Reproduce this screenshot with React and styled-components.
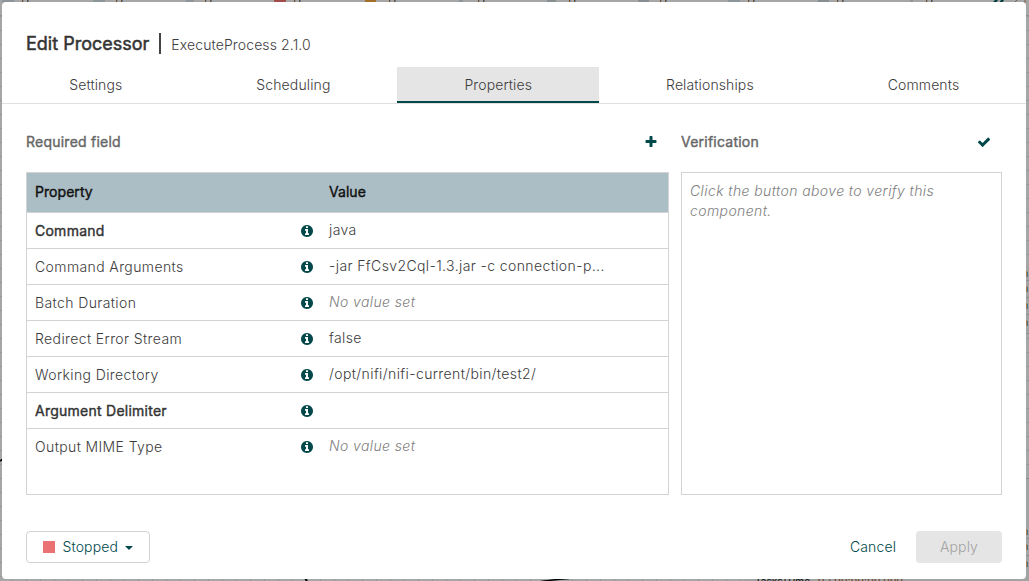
import React from "react";
import styled, { createGlobalStyle } from "styled-components";

const GlobalStyle = createGlobalStyle`
  * { box-sizing: border-box; }
  body {
    margin: 0;
    overflow: hidden;
    background: #a6a6a6;
    font-family: Inter, "Liberation Sans", sans-serif;
    font-size: 14px;
    font-weight: 350;
    line-height: 20px;
    color: #3c3c3c;
  }
`;

const Page = styled.div`
  position: relative;
  height: 581px;
  width: 1029px;
  padding: 2px 3px 2px 2px;
  overflow: hidden;
`;

const CanvasArt = styled.svg`
  position: absolute;
  inset: 0;
`;

const Dialog = styled.div`
  position: relative;
  height: 577px;
  display: flex;
  flex-direction: column;
  background: #fff;
  border-radius: 4px;
`;

const Title = styled.header`
  height: 65px;
  padding: 28px 24px 0;
  display: flex;
  align-items: baseline;
  line-height: 28px;
`;

const TitleName = styled.span`
  font-size: 18px;
  font-weight: 400;
  -webkit-text-stroke: 0.5px currentColor;
  color: #333;
`;

const TitleBar = styled.span`
  width: 2px;
  height: 21px;
  margin: 3px 10px 0;
  align-self: flex-start;
  background: #444;
`;

const TitleType = styled.span`
  font-size: 14px;
  letter-spacing: 0.12px;
`;

const Tabs = styled.nav`
  display: flex;
  height: 37px;
  border-bottom: 1px solid #e0e0e0;
`;

const Tab = styled.div`
  flex: 1 1 auto;
  display: flex;
  align-items: center;
  justify-content: center;
  letter-spacing: 0.12px;
  padding-left: 0.5px;
  background: ${(p) => (p.$active ? "#e5e5e5" : "transparent")};
  box-shadow: ${(p) => (p.$active ? "inset 0 -2px #004849" : "none")};
`;

const Content = styled.main`
  display: grid;
  grid-template-columns: 643px 321px;
  column-gap: 12px;
  padding: 24px 24px 0;
`;

const Panel = styled.section`
  display: flex;
  flex-direction: column;
`;

const PanelHead = styled.div`
  display: flex;
  align-items: center;
  justify-content: space-between;
  height: 28px;
  margin-bottom: 16px;
  padding-right: 11.5px;
`;

const PanelTitle = styled.h2`
  margin: 0;
  font-size: 14px;
  font-weight: 400;
  letter-spacing: 0.23px;
  -webkit-text-stroke: 0.4px currentColor;
  color: #666;
`;

const Box = styled.div`
  height: 323px;
  border: 1px solid #d3d3d3;
`;

const Hint = styled.p`
  margin: 0;
  padding: 8px;
  font-style: italic;
  letter-spacing: 0.4px;
  color: #808080;
`;

const Row = styled.div`
  display: grid;
  grid-template-columns: 294px 1fr;
  height: 36px;
  border-bottom: 1px solid #d3d3d3;
  &:last-child { border-bottom-color: transparent; }
`;

const HeaderRow = styled(Row)`
  height: 40px;
  background: #abbdc5;
  color: #111;
`;

const HeaderCell = styled.div`
  padding: 9px 8px;
  font-weight: 400;
  letter-spacing: 0.05px;
  -webkit-text-stroke: 0.4px currentColor;
`;

const NameCell = styled.div`
  display: flex;
  align-items: center;
  justify-content: space-between;
  padding: 1px 7px 0 8px;
`;

const PropName = styled.span`
  font-weight: ${(p) => (p.$required ? 400 : 350)};
  letter-spacing: ${(p) => (p.$required ? "0.25px" : "0.39px")};
  -webkit-text-stroke: ${(p) => (p.$required ? "0.4px currentColor" : "0")};
  color: ${(p) => (p.$required ? "#333" : "#3c3c3c")};
`;

const ValueCell = styled.div`
  padding: 7px 8px;
  width: 290px;
  letter-spacing: 0.39px;
  white-space: nowrap;
  font-style: ${(p) => (p.$unset ? "italic" : "normal")};
  color: ${(p) => (p.$unset ? "#808080" : "#3c3c3c")};
`;

const Footer = styled.footer`
  display: flex;
  justify-content: space-between;
  padding: 36px 24px 0;
`;

const Actions = styled.div`
  display: flex;
`;

const Button = styled.button`
  display: flex;
  align-items: center;
  justify-content: center;
  width: ${(p) => p.$width}px;
  height: 32px;
  padding: 0;
  font: inherit;
  letter-spacing: 0.12px;
  border-radius: 4px;
  border: ${(p) => (p.$outlined ? "1px solid #d3d3d3" : "0")};
  background: ${(p) => (p.$disabled ? "#e5e5e5" : "#fff")};
  color: ${(p) => (p.$disabled ? "#a3a3a3" : "#004849")};
`;

const StopMark = styled.span`
  width: 12px;
  height: 12px;
  margin-right: 8px;
  background: #eb7272;
`;

const Caret = styled.span`
  margin: 1px 0 0 7.5px;
  border: 4.5px solid transparent;
  border-top-color: #004849;
  border-bottom: 0;
`;

const Icon = styled.svg`
  flex: none;
  width: 14px;
  height: 14px;
  fill: #004849;
`;

const paths = {
  info: "M1152 1376v-160q0-14-9-23t-23-9h-96v-512q0-14-9-23t-23-9h-320q-14 0-23 9t-9 23v160q0 14 9 23t23 9h96v320h-96q-14 0-23 9t-9 23v160q0 14 9 23t23 9h448q14 0 23-9t9-23zm-128-896v-160q0-14-9-23t-23-9h-192q-14 0-23 9t-9 23v160q0 14 9 23t23 9h192q14 0 23-9t9-23zm640 416q0 209-103 385.5t-279.5 279.5-385.5 103-385.5-103-279.5-279.5-103-385.5 103-385.5 279.5-279.5 385.5-103 385.5 103 279.5 279.5 103 385.5z",
  plus: "M1600 736v192q0 40-28 68t-68 28h-416v416q0 40-28 68t-68 28h-192q-40 0-68-28t-28-68v-416h-416q-40 0-68-28t-28-68v-192q0-40 28-68t68-28h416v-416q0-40 28-68t68-28h192q40 0 68 28t28 68v416h416q40 0 68 28t28 68z",
  check: "M1671 566q0 40-28 68l-724 724-136 136q-28 28-68 28t-68-28l-136-136-362-362q-28-28-28-68t28-68l136-136q28-28 68-28t68 28l294 295 656-657q28-28 68-28t68 28l136 136q28 28 28 68z",
};

function Glyph({ name }) {
  return (
    <Icon viewBox="0 0 1792 1792" aria-hidden="true">
      <path d={paths[name]} />
    </Icon>
  );
}

const properties = [
  { name: "Command", value: "java", required: true },
  { name: "Command Arguments", value: "-jar FfCsv2Cql-1.3.jar -c connection-p..." },
  { name: "Batch Duration", value: null },
  { name: "Redirect Error Stream", value: "false" },
  { name: "Working Directory", value: "/opt/nifi/nifi-current/bin/test2/" },
  { name: "Argument Delimiter", value: "", required: true },
  { name: "Output MIME Type", value: null },
];

const tabs = ["Settings", "Scheduling", "Properties", "Relationships", "Comments"];

const counters = [22, 116, 205, 294, 389, 478, 569, 660, 748, 837, 926];
const marks = [
  [2, 12, "#8c9599"], [93, 12, "#8c9599"], [186, 8, "#8c9599"], [274, 12, "#a34a4a"],
  [365, 11, "#a0702a"], [459, 4, "#8c9599"], [547, 9, "#868e91"], [638, 11, "#868e91"],
  [728, 12, "#8c9599"], [818, 11, "#868e91"], [910, 3, "#8c9599"],
];

function Backdrop() {
  return (
    <CanvasArt width="1029" height="581" aria-hidden="true">
      <defs>
        <pattern id="grid" width="14" height="14" y="2" x="12" patternUnits="userSpaceOnUse">
          <path d="M0.5 0V14M0 0.5H14" stroke="#969898" fill="none" />
        </pattern>
      </defs>
      <rect y="14" width="1029" height="567" fill="url(#grid)" />
      <path d="M0 15.5H1029" stroke="#8c9090" />
      {marks.map(([x, w, c]) => (
        <rect key={x} x={x} y="0" width={w} height="2" fill={c} />
      ))}
      {counters.map((x) => (
        <g key={x}>
          <rect x={x} y="0" width="1" height="2" fill="#7a4a20" />
          <rect x={x + 1} y="0" width="1" height="2" fill="#8494a6" />
          <rect x={x + 5} y="0" width="1" height="2" fill="#7a4a20" />
          <rect x={x + 6} y="0" width="1" height="2" fill="#5c7d9c" />
        </g>
      ))}
      <path d="M992 3l3-3h3l-2 3zM999 3l2-3h3l-2 3z" fill="#003c40" />
      <path d="M1014 3l3-3M1025 0v3" stroke="#7c5a40" fill="none" />
      <path d="M0 461l3-2" stroke="#000" strokeWidth="1.6" />
      <path d="M305 578l2 3" stroke="#000" strokeWidth="2" />
      <path d="M541 581.5q14-2 28-3" stroke="#000" strokeWidth="1.5" fill="none" />
      <rect x="744" y="579" width="285" height="2" fill="#a1a3a2" />
      <rect x="1026" y="267" width="3" height="67" fill="#a1a3a2" />
      <rect x="1026" y="478" width="3" height="103" fill="#a1a3a2" />
      <path d="M1026 280.5h3M1026 297.5h3M1026 314.5h3M1026 333.5h3M1026 478.5h3M1026 538.5h3M1026 555.5h3" stroke="#8c8e8e" />
      {[271, 286, 303, 320, 529, 544, 561].map((y) => (
        <g key={y}>
          <rect x="1026" y={y} width="1" height="6" fill="#a77a48" />
          <rect x="1027" y={y + 1} width="1" height="5" fill="#4c7590" />
        </g>
      ))}
      <text x="755" y="585" fontSize="10" fontWeight="500" textLength="55" fill="#20201c">Tasks/Time</text>
      <text x="818" y="585" fontSize="10" fontWeight="500" textLength="85" fill="#70482c">0 / 00:00:00.000</text>
    </CanvasArt>
  );
}

export default function App() {
  return (
    <Page>
      <GlobalStyle />
      <Backdrop />
      <Dialog role="dialog">
        <Title>
          <TitleName>Edit Processor</TitleName>
          <TitleBar />
          <TitleType>ExecuteProcess 2.1.0</TitleType>
        </Title>
        <Tabs>
          {tabs.map((label) => (
            <Tab key={label} $active={label === "Properties"}>{label}</Tab>
          ))}
        </Tabs>
        <Content>
          <Panel>
            <PanelHead>
              <PanelTitle>Required field</PanelTitle>
              <Glyph name="plus" />
            </PanelHead>
            <Box>
              <HeaderRow>
                <HeaderCell>Property</HeaderCell>
                <HeaderCell>Value</HeaderCell>
              </HeaderRow>
              {properties.map(({ name, value, required }) => (
                <Row key={name}>
                  <NameCell>
                    <PropName $required={required}>{name}</PropName>
                    <Glyph name="info" />
                  </NameCell>
                  <ValueCell $unset={value === null}>{value ?? "No value set"}</ValueCell>
                </Row>
              ))}
            </Box>
          </Panel>
          <Panel>
            <PanelHead>
              <PanelTitle>Verification</PanelTitle>
              <Glyph name="check" />
            </PanelHead>
            <Box>
              <Hint>Click the button above to verify this component.</Hint>
            </Box>
          </Panel>
        </Content>
        <Footer>
          <Button $width={124} $outlined>
            <StopMark />
            Stopped
            <Caret />
          </Button>
          <Actions>
            <Button $width={86}>Cancel</Button>
            <Button $width={86} $disabled disabled>Apply</Button>
          </Actions>
        </Footer>
      </Dialog>
    </Page>
  );
}
